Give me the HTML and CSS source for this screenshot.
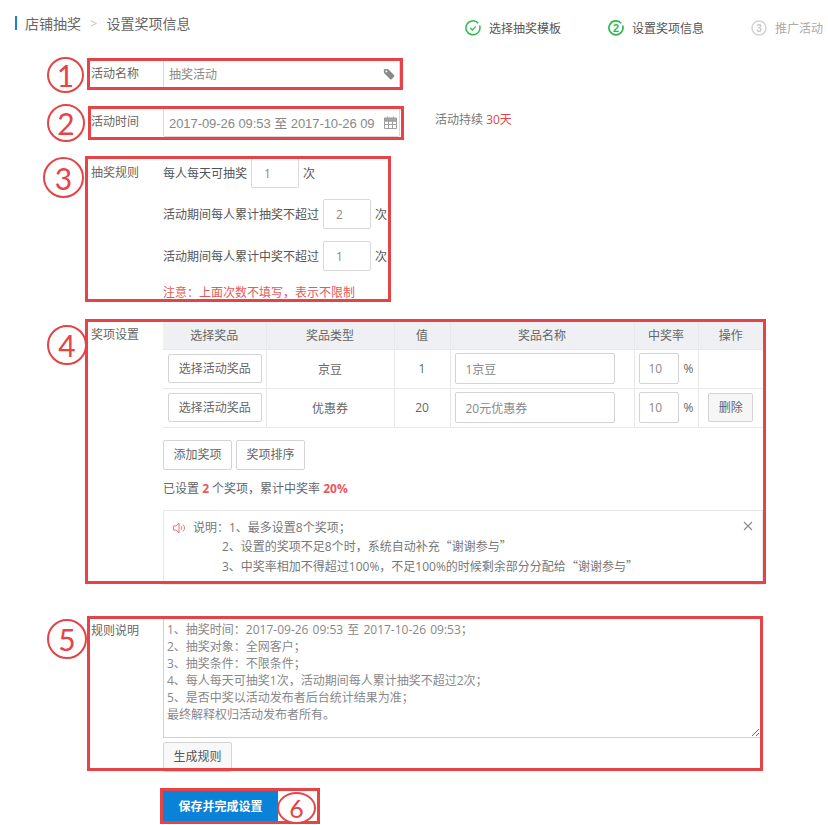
FILE: index.html
```html
<!DOCTYPE html>
<html lang="zh-CN">
<head>
<meta charset="utf-8">
<title>设置奖项信息</title>
<link rel="stylesheet" href="styles.css">
</head>
<body>
<div class="page">
  <header class="top">
    <div class="crumb"><span>店铺抽奖</span><span class="sep">&gt;</span><span>设置奖项信息</span></div>
    <ol class="steps">
      <li class="step done">
        <svg class="step-icon" viewBox="0 0 16 16"><path d="M13.2 3.2A7 7 0 1 0 14.6 5.6" fill="none" stroke="#2fb84f" stroke-width="1.5"/><path d="M5.3 8l2 2 3.4-3.4" fill="none" stroke="#2fb84f" stroke-width="1.3"/></svg>
        <span>选择抽奖模板</span>
      </li>
      <li class="step active">
        <svg class="step-icon" viewBox="0 0 16 16"><path d="M13.2 3.2A7 7 0 1 0 14.6 5.6" fill="none" stroke="#2fb84f" stroke-width="1.7"/><text x="8" y="12" text-anchor="middle" class="num-on">2</text></svg>
        <span>设置奖项信息</span>
      </li>
      <li class="step todo">
        <svg class="step-icon" viewBox="0 0 16 16"><circle cx="8" cy="8" r="7" fill="none" stroke="#d4d4d4" stroke-width="1.5"/><text x="8" y="11.5" text-anchor="middle" class="num-off">3</text></svg>
        <span>推广活动</span>
      </li>
    </ol>
  </header>

  <main class="form">
    <div class="row row-name">
      <div class="label">活动名称</div>
      <div class="field field-wide">
        <input class="input" value="抽奖活动">
        <svg class="field-icon" viewBox="0 0 12 12"><path d="M0.8 1.3L5 1l6.2 6.2a1 1 0 0 1 0 1.4l-2.6 2.6a1 1 0 0 1-1.4 0L1 5z" fill="#8a8a8a"/><circle cx="3.4" cy="3.4" r="1" fill="#fff"/></svg>
      </div>
    </div>

    <div class="row row-time">
      <div class="label">活动时间</div>
      <div class="field field-wide">
        <input class="input input-date" value="2017-09-26 09:53 至 2017-10-26 09:53">
        <svg class="field-icon cal" viewBox="0 0 13 13"><path d="M0.5 2h12v3H0.5z" fill="#a8a8a8" stroke="#999"/><path d="M0.5 5h12v7.5H0.5zM0.5 8.5h12M4.5 5v7.5M8.5 5v7.5M3.5 0.5v2M9.5 0.5v2" fill="none" stroke="#a0a0a0"/></svg>
      </div>
      <div class="duration">活动持续 <em>30天</em></div>
    </div>

    <div class="row row-rules">
      <div class="label">抽奖规则</div>
      <div class="rules">
        <div class="rule">每人每天可抽奖<input class="input num" value="1">次</div>
        <div class="rule rule-2">活动期间每人累计抽奖不超过<input class="input num" value="2">次</div>
        <div class="rule rule-3">活动期间每人累计中奖不超过<input class="input num" value="1">次</div>
        <div class="notice">注意：上面次数不填写，表示不限制</div>
      </div>
    </div>

    <div class="row row-prizes">
      <div class="label label-th">奖项设置</div>
      <div class="prizes">
        <table class="table">
          <colgroup><col class="c1"><col class="c2"><col class="c3"><col class="c4"><col class="c5"><col class="c6"></colgroup>
          <thead>
            <tr><th>选择奖品</th><th>奖品类型</th><th>值</th><th>奖品名称</th><th>中奖率</th><th>操作</th></tr>
          </thead>
          <tbody>
            <tr>
              <td><button class="btn btn-choose">选择活动奖品</button></td>
              <td>京豆</td>
              <td>1</td>
              <td class="left"><input class="input name" value="1京豆"></td>
              <td class="left"><input class="input rate" value="10"><span class="pct">%</span></td>
              <td></td>
            </tr>
            <tr>
              <td><button class="btn btn-choose">选择活动奖品</button></td>
              <td>优惠券</td>
              <td>20</td>
              <td class="left"><input class="input name" value="20元优惠券"></td>
              <td class="left"><input class="input rate" value="10"><span class="pct">%</span></td>
              <td><button class="btn btn-del">删除</button></td>
            </tr>
          </tbody>
        </table>
        <div class="actions">
          <button class="btn btn-plain">添加奖项</button>
          <button class="btn btn-plain">奖项排序</button>
        </div>
        <p class="summary">已设置 <b>2</b> 个奖项，累计中奖率 <b>20%</b></p>
        <div class="alert">
          <svg class="speaker" viewBox="0 0 13 12"><path d="M0.5 4h2.5l3-3v10l-3-3H0.5z" fill="none" stroke="#e8787a"/><path d="M8 4.2a2.5 2.5 0 0 1 0 3.6M10 2.6a5 5 0 0 1 0 6.8" fill="none" stroke="#e8787a"/></svg>
          <div class="alert-text">
            <div>说明：1、最多设置8个奖项；</div>
            <div class="indent">2、设置的奖项不足8个时，系统自动补充<span class="cjk">“谢谢参与”</span></div>
            <div class="indent">3、中奖率相加不得超过100%，不足100%的时候剩余部分分配给<span class="cjk">“谢谢参与”</span></div>
          </div>
          <svg class="close" viewBox="0 0 10 10"><path d="M1 1l8 8M9 1l-8 8" stroke="#8c8c8c" stroke-width="1.1" fill="none"/></svg>
        </div>
      </div>
    </div>

    <div class="row row-desc">
      <div class="label">规则说明</div>
      <div class="desc">
        <textarea class="textarea">1、抽奖时间：2017-09-26 09:53 至 2017-10-26 09:53；
2、抽奖对象：全网客户；
3、抽奖条件：不限条件；
4、每人每天可抽奖1次，活动期间每人累计抽奖不超过2次；
5、是否中奖以活动发布者后台统计结果为准；
最终解释权归活动发布者所有。</textarea>
        <button class="btn btn-gen">生成规则</button>
      </div>
    </div>

    <div class="save-row"><button class="btn-save">保存并完成设置</button></div>
  </main>

  <div class="marks">
    <div class="box b1"></div><div class="box b2"></div><div class="box b3"></div>
    <div class="box b4"></div><div class="box b5"></div><div class="box b6"></div>
    <div class="dot d1">1</div><div class="dot d2">2</div><div class="dot d3">3</div>
    <div class="dot d4">4</div><div class="dot d5">5</div><div class="dot d6">6</div>
  </div>
</div>
</body>
</html>
```

FILE: styles.css
```css
* { box-sizing: border-box; }
html, body { margin: 0; padding: 0; background: #fff; }
body {
  font-family: "Open Sans", "Noto Sans CJK SC", sans-serif;
  font-size: 12px;
  color: #666;
}
.page { position: relative; width: 828px; height: 825px; overflow: hidden; }
button, input, textarea { font: inherit; color: inherit; margin: 0; }
.cjk { font-family: "Noto Sans CJK SC", sans-serif; }

.top { display: flex; height: 59px; padding-top: 16px; justify-content: space-between; }
.crumb {
  display: flex; align-items: center; height: 14px; margin-left: 15px; padding-left: 8px;
  border-left: 2px solid #1b87bd; font-size: 14px; color: #666;
}
.sep { margin: 0 9px; color: #c4c4c4; font-size: 13px; }
.steps { display: flex; list-style: none; margin: 4px 0 0; padding: 0; height: 16px; }
.step { display: flex; align-items: center; gap: 8px; color: #555; height: 16px; }
.step.done { width: 143px; }
.step.active { width: 143px; }
.step.todo { color: #aaa; width: 77px; }
.step-icon { width: 16px; height: 16px; flex: none; }
.num-on { font: bold 11px "Liberation Sans", sans-serif; fill: #2fb84f; }
.num-off { font: bold 10px "Liberation Sans", sans-serif; fill: #c8c8c8; }

.form { padding-left: 91px; }
.row { display: flex; }
.label { flex: none; width: 72px; line-height: 29px; color: #666; }
.row-name { margin-bottom: 18px; }
.row-time { margin-bottom: 21px; align-items: flex-start; }
.row-rules { margin-bottom: 20px; }
.row-prizes { margin-bottom: 31px; }
.row-desc { margin-bottom: 19px; }

.field { position: relative; flex: none; }
.field-wide { width: 237px; height: 30px; }
.input {
  height: 30px; border: 1px solid #d9d9d9; background: #fff; color: #888;
  padding: 0 5px; outline: none; border-radius: 2px; font-size: 12px;
}
.field-wide .input { width: 100%; padding-right: 24px; }
.input-date { font-family: "Liberation Sans", "Noto Sans CJK SC", sans-serif; font-size: 13px; letter-spacing: -0.06px; }
.field-icon { position: absolute; right: 5px; top: 9px; width: 12px; height: 12px; }
.field-icon.cal { right: 3px; width: 13px; height: 13px; }
.duration { margin-left: 35px; line-height: 26px; color: #777; }
.duration em { font-style: normal; color: #e2474a; }

.rules { display: flex; flex-direction: column; }
.rule { display: flex; align-items: center; height: 30px; color: #555; }
.rule-2 { margin-top: 11px; }
.rule-3 { margin-top: 12px; }
.num { width: 48px; padding: 0 12px; margin: 0 4px; }
.notice { margin-top: 13px; line-height: 17px; color: #e8585a; }

.label-th { line-height: 28px; }
.prizes { width: 600px; }
.table { width: 600px; border-collapse: collapse; table-layout: fixed; color: #666; }
.c1 { width: 103px; } .c2 { width: 128px; } .c3 { width: 56px; }
.c4 { width: 184px; } .c5 { width: 64px; } .c6 { width: 65px; }
.table th {
  height: 28px; padding: 0; font-weight: normal; background: #eef0f3;
  border: 1px solid #e6e8eb; border-top: 0; color: #666;
}
.table td { height: 39px; padding: 0; text-align: center; border: 1px solid #e8e8e8; }
.table th:first-child, .table td:first-child { border-left: 0; }
.table th:last-child, .table td:last-child { border-right: 0; }
.table td.left { text-align: left; padding-left: 4px; }
.table .input { vertical-align: middle; height: 31px; border-color: #d4d4d4; }
.name { width: 160px; padding: 0 10px; }
.table .rate { width: 40px; padding: 0 9px; }
.pct { margin-left: 5px; vertical-align: middle; }

.btn {
  display: inline-block; height: 30px; padding: 0; background: #fff; color: #666;
  border: 1px solid #d4d4d4; border-radius: 2px; font-size: 12px; line-height: 28px;
}
.btn-choose { width: 94px; height: 29px; margin-left: 1px; }
.btn-del { width: 45px; height: 29px; background: #f6f6f6; }
.btn-plain { width: 69px; }
.actions { display: flex; gap: 4px; margin-top: 12px; }
.summary { margin: 10px 0 0; line-height: 18px; color: #666; }
.summary b { color: #e8585a; }

.alert {
  position: relative; display: flex; height: 75px; margin-top: 12px; padding: 8px 0 0 9px;
  border: 1px solid #e8e8e8; color: #777; line-height: 18.5px;
}
.speaker { width: 13px; height: 12px; margin: 3px 7px 0 0; flex: none; }
.indent { padding-left: 29px; }
.close { position: absolute; right: 9px; top: 10px; width: 10px; height: 10px; }

.desc { width: 600px; display: flex; flex-direction: column; align-items: flex-start; }
.textarea {
  display: block; width: 598px; height: 122px; margin-top: 0; padding: 4px 3px;
  border: 1px solid #d0d0d0; line-height: 17px; color: #888; outline: none; font-size: 12px;
  word-spacing: 1px;
}
.btn-gen { width: 69px; margin-top: 4px; background: #f8f8f8; color: #555; }
.save-row { padding-left: 72px; }
.btn-save {
  width: 115px; height: 30px; padding: 0; border: 0; background: #0a82d8; color: #fff;
  font-size: 12px; font-weight: bold;
}

.marks { position: absolute; inset: 0; pointer-events: none; }
.box { position: absolute; border: 3px solid #e54345; }
.b1 { left: 87px; top: 58px; width: 316px; height: 32px; }
.b2 { left: 88px; top: 106px; width: 316px; height: 34px; }
.b3 { left: 85px; top: 156px; width: 306px; height: 146px; }
.b4 { left: 85px; top: 319px; width: 681px; height: 265px; }
.b5 { left: 87px; top: 616px; width: 676px; height: 155px; }
.b6 { left: 160px; top: 788px; width: 160px; height: 36px; }
.dot {
  position: absolute; border: 2.5px solid #e54345; border-radius: 50%; background: #fff;
  color: #e54345; font-family: "Lato", sans-serif; font-size: 30px; line-height: 1;
  display: flex; align-items: center; justify-content: center;
}
.d1 { left: 47px; top: 57px; width: 37px; height: 36px; }
.d2 { left: 47px; top: 104px; width: 38px; height: 38px; }
.d3 { left: 43px; top: 157px; width: 41px; height: 41px; }
.d4 { left: 47px; top: 325px; width: 40px; height: 40px; }
.d5 { left: 47px; top: 619px; width: 40px; height: 40px; }
.d6 { left: 277px; top: 792px; width: 39px; height: 32px; font-size: 25px; }
```
